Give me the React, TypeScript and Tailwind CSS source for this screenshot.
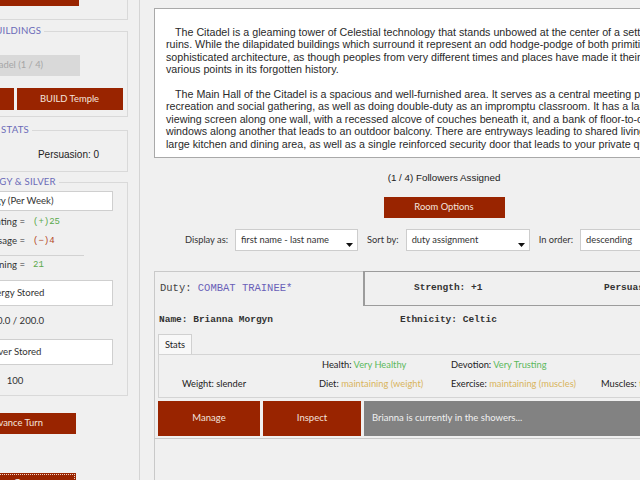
const ui = "font-['Lato','Open_Sans',sans-serif]";
const serifless = "font-['Liberation_Sans',Arial,sans-serif]";
const mono = "font-['Liberation_Mono','Courier_New',monospace]";

function RedButton({ label, className }: { label: string; className: string }) {
  return (
    <div
      className={`flex items-center justify-center whitespace-nowrap bg-[#992400] text-[9.4px] text-[#f4e4de] ${ui} ${className}`}
    >
      {label}
    </div>
  );
}

function Legend({ text }: { text: string }) {
  return (
    <legend className={`mx-auto px-[3px] text-[9.6px] leading-[14px] tracking-[0.2px] text-[#6b6bb8] ${ui}`}>
      {text}
    </legend>
  );
}

function Sidebar() {
  return (
    <div className="h-[480px] w-[140px] shrink-0 overflow-hidden border-r border-[#d4d4d4]">
      <div className="ml-[-98px] mt-[-26px] flex w-[226px] flex-col">
        <div className="border border-[#d9d9d9] pb-[13px] pt-[10px]">
          <RedButton label="Assign" className="mx-auto h-[21px] w-[128px]" />
        </div>

        <fieldset className="mt-[4px] border border-[#d9d9d9] pb-[6px]">
          <Legend text="BUILDINGS" />
          <div
            className={`mx-auto mt-[17px] flex h-[21px] w-[130px] items-center justify-center bg-[#d9d9d9] text-[9.4px] text-[#a6a6a6] ${ui}`}
          >
            Citadel (1 / 4)
          </div>
          <div className="mt-[12px] flex justify-center gap-[3px]">
            <RedButton label="BUILD Shrine" className="h-[22px] w-[106px]" />
            <RedButton label="BUILD Temple" className="h-[22px] w-[106px]" />
          </div>
        </fieldset>

        <fieldset className="mt-[6px] border border-[#d9d9d9] pb-[9px]">
          <Legend text="STATS" />
          <div className={`mt-[9px] grid h-[16px] grid-cols-2 items-center text-center text-[10px] text-[#222] ${serifless}`}>
            <span>Strength: 0</span>
            <span className="pr-[5px]">Persuasion: 0</span>
          </div>
        </fieldset>

        <fieldset className={`mt-[3px] border border-[#d9d9d9] pb-[5px] text-[9.6px] text-[#333] ${ui}`}>
          <Legend text="ENERGY & SILVER" />
          <div className="mx-auto mt-[2px] flex h-[20px] w-[196px] items-center justify-center border border-[#cfcfcf] bg-white">
            Energy (Per Week)
          </div>
          <div className="mt-[2px] flex h-[19px] items-center">
            <span className="w-[122px] text-right">Generating =</span>
            <span className={`pl-[8px] text-[9px] text-[#5aa84c] ${mono}`}>(+)25</span>
          </div>
          <div className="flex h-[19px] items-center">
            <span className="w-[122px] text-right">Usage =</span>
            <span className={`pl-[8px] text-[9px] text-[#b5482a] ${mono}`}>(−)4</span>
          </div>
          <div className="ml-[47px] mt-[4px] h-px w-[134px] bg-[#d2d2d2]" />
          <div className="flex h-[19px] items-center">
            <span className="w-[122px] text-right">Remaining =</span>
            <span className={`pl-[8px] text-[9px] text-[#5aa84c] ${mono}`}>21</span>
          </div>
          <div className="mx-auto mt-[5px] flex h-[26px] w-[196px] items-center justify-center border border-[#cfcfcf] bg-white">
            Energy Stored
          </div>
          <div className="mt-[6px] flex h-[18px] items-center justify-center">100.0 / 200.0</div>
          <div className="mx-auto mt-[9px] flex h-[26px] w-[196px] items-center justify-center border border-[#cfcfcf] bg-white">
            Silver Stored
          </div>
          <div className="mt-[7px] flex h-[18px] items-center justify-center">100</div>
        </fieldset>

        <RedButton label="Advance Turn" className="mx-auto mt-[17px] h-[21px] w-[122px]" />
        <RedButton
          label="Save Game"
          className="mx-auto mt-[39px] h-[21px] w-[122px] outline-1 -outline-offset-2 outline-dotted outline-[#f0d0c4]"
        />
      </div>
    </div>
  );
}

function Select({ value, width }: { value: string; width: string }) {
  return (
    <div
      className={`flex h-[22px] items-center justify-between whitespace-nowrap border border-[#cdcdcd] bg-white pl-[5px] pr-[4px] ${width}`}
    >
      <span>{value}</span>
      <svg width="7" height="4" viewBox="0 0 7 4" className="mt-[9px] shrink-0">
        <path d="M0 0h7L3.5 4z" fill="#111" />
      </svg>
    </div>
  );
}

function Description() {
  return (
    <div
      className={`h-[150px] overflow-hidden whitespace-nowrap border border-[#a9a9a9] bg-white pl-[11px] pt-[17px] text-[10.7px] leading-[12.4px] text-[#2a2a2a] ${serifless}`}
    >
      <p className="indent-[9px]">
        The Citadel is a gleaming tower of Celestial technology that stands unbowed at the center of a settlement of
        <br />
        ruins. While the dilapidated buildings which surround it represent an odd hodge-podge of both primitive and
        <br />
        sophisticated architecture, as though peoples from very different times and places have made it their home at
        <br />
        various points in its forgotten history.
      </p>
      <p className="mt-[12.4px] indent-[9px]">
        The Main Hall of the Citadel is a spacious and well-furnished area. It serves as a central meeting place for
        <br />
        recreation and social gathering, as well as doing double-duty as an impromptu classroom. It has a large
        <br />
        viewing screen along one wall, with a recessed alcove of couches beneath it, and a bank of floor-to-ceiling
        <br />
        windows along another that leads to an outdoor balcony. There are entryways leading to shared living quarters, a
        <br />
        large kitchen and dining area, as well as a single reinforced security door that leads to your private quarters.
      </p>
    </div>
  );
}

function FollowerCard() {
  return (
    <div className="mt-[20px] border border-[#c9c9c9] pb-[2px]">
      <div className="flex h-[34px]">
        <div className={`flex w-[208px] items-center pl-[5px] text-[10.5px] text-[#444] ${mono}`}>
          Duty:&nbsp;<span className="text-[#6a5fb8]">COMBAT TRAINEE*</span>
        </div>
        <div
          className={`-mt-px flex flex-1 items-center border-y border-l-2 border-[#9c9c9c] pl-[49px] text-[9.5px] font-bold text-[#333] ${mono}`}
        >
          <span className="w-[190px]">Strength: +1</span>
          <span>Persuasion: +0</span>
        </div>
      </div>
      <div className={`flex h-[28px] items-center pl-[4px] text-[9.5px] font-bold text-[#333] ${mono}`}>
        <span className="w-[241px]">Name: Brianna Morgyn</span>
        <span>Ethnicity: Celtic</span>
      </div>
      <div className={`mx-[3px] whitespace-nowrap text-[9.3px] text-[#222] ${ui}`}>
        <div className="flex h-[20px] w-[34px] items-center justify-center border border-b-0 border-[#d0d0d0] bg-[#f8f8f8]">
          Stats
        </div>
        <div className="border border-[#d4d4d4] pb-[4px]">
          <div className="flex h-[19px] items-center pl-[163px]">
            <span className="w-[129px]">
              Health: <span className="text-[#5cb85c]">Very Healthy</span>
            </span>
            <span>
              Devotion: <span className="text-[#5cb85c]">Very Trusting</span>
            </span>
          </div>
          <div className="flex h-[19px] items-center pl-[23px]">
            <span className="w-[137px]">Weight: slender</span>
            <span className="w-[132px]">
              Diet: <span className="text-[#d9b45c]">maintaining (weight)</span>
            </span>
            <span className="w-[150px]">
              Exercise: <span className="text-[#d9b45c]">maintaining (muscles)</span>
            </span>
            <span>
              Muscles: <span className="text-[#d9b45c]">toned</span>
            </span>
          </div>
        </div>
      </div>
      <div className={`mx-[3px] mt-[3px] flex h-[35px] gap-[3px] text-[9.5px] text-[#f3e2dc] ${ui}`}>
        <div className="flex w-[102px] items-center justify-center bg-[#992400]">Manage</div>
        <div className="flex w-[98px] items-center justify-center bg-[#992400]">Inspect</div>
        <div className="flex flex-1 items-center bg-[#828282] pl-[8px] text-[#f0f0f0]">
          Brianna is currently in the showers...
        </div>
      </div>
    </div>
  );
}

export default function App() {
  return (
    <div className="flex h-[480px] w-[640px] overflow-hidden bg-[#f0f0f0]">
      <Sidebar />
      <div className="ml-[14px] flex w-[580px] shrink-0 flex-col pt-[8px]">
        <Description />
        <div className={`mt-[13px] flex h-[14px] items-center justify-center text-[9.8px] text-[#222] ${serifless}`}>
          (1 / 4) Followers Assigned
        </div>
        <RedButton label="Room Options" className="mx-auto mt-[12px] h-[21px] w-[121px]" />
        <div className={`mt-[11px] flex items-center justify-center text-[9.3px] text-[#333] ${ui}`}>
          <span className="mr-[7px]">Display as:</span>
          <Select value="first name - last name" width="w-[123px]" />
          <span className="ml-[9px] mr-[7px]">Sort by:</span>
          <Select value="duty assignment" width="w-[124px]" />
          <span className="ml-[9px] mr-[7px]">In order:</span>
          <Select value="descending" width="w-[123px]" />
        </div>
        <FollowerCard />
        <div className="flex-1 border-x border-[#c9c9c9]" />
      </div>
    </div>
  );
}
